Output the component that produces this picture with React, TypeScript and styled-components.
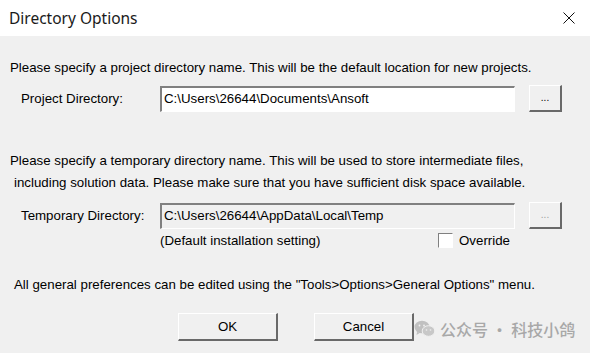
import React from "react";
import styled, { createGlobalStyle, css } from "styled-components";

const Global = createGlobalStyle`
  html, body { margin: 0; padding: 0; background: #f0f0f0; }
  body { width: 590px; height: 353px; overflow: hidden; }
`;

const Dialog = styled.div`
  width: 590px;
  height: 353px;
  display: flex;
  flex-direction: column;
  background: #f0f0f0;
  font-family: "Liberation Sans", Arial, sans-serif;
  font-size: 13.3px;
  color: #000;
`;

const TitleBar = styled.div`
  height: 36px;
  background: #fff;
  display: flex;
  align-items: center;
  justify-content: space-between;
  padding: 0 15px 0 9px;
  flex-shrink: 0;
`;

const Title = styled.div`
  font-family: "Noto Sans", "Open Sans", sans-serif;
  font-size: 15.5px;
  color: #1a1a1a;
  margin-top: -1px;
`;

const Body = styled.div`
  display: flex;
  flex-direction: column;
  padding: 24px 0 0 10px;
`;

const Para = styled.div<{ $indent?: number; $mt?: number }>`
  margin-left: ${(p) => p.$indent ?? 0}px;
  margin-top: ${(p) => p.$mt ?? 0}px;
  line-height: 16px;
  white-space: nowrap;
`;

const FieldRow = styled.div<{ $mt: number }>`
  display: flex;
  align-items: center;
  margin-top: ${(p) => p.$mt}px;
`;

const Label = styled.div`
  width: 150px;
  padding-left: 11px;
  box-sizing: border-box;
`;

const TextField = styled.div<{ $disabled?: boolean }>`
  width: 355px;
  height: 26px;
  box-sizing: border-box;
  border-style: solid;
  border-width: 2px 1px 1px 2px;
  border-color: #808080 #fff #fff #808080;
  background: ${(p) => (p.$disabled ? "#f0f0f0" : "#fff")};
  padding: 3px 2px 0;
  line-height: 16px;
  white-space: nowrap;
  overflow: hidden;
`;

const raised = css`
  box-sizing: border-box;
  background: #f0f0f0;
  border-style: solid;
  border-width: 1px 2px 2px 1px;
  border-color: #fff #696969 #696969 #fff;
  display: flex;
  align-items: center;
  justify-content: center;
  font-family: "Liberation Sans", Arial, sans-serif;
  font-size: 13.3px;
  padding: 0;
`;

const Browse = styled.div<{ $disabled?: boolean }>`
  ${raised};
  width: 33px;
  height: 27px;
  margin-left: 14px;
  color: ${(p) => (p.$disabled ? "#a0a0a0" : "#000")};
  font-size: 10px;
  padding-bottom: 2px;
`;

const SubRow = styled.div`
  display: flex;
  align-items: center;
  margin-top: 2px;
  padding-left: 150px;
  height: 18px;
`;

const Note = styled.div`
  width: 278px;
`;

const Check = styled.div`
  width: 15px;
  height: 15px;
  box-sizing: border-box;
  background: #fff;
  border-style: solid;
  border-width: 1px;
  border-color: #808080 #fff #fff #808080;
  margin-right: 6px;
`;

const Buttons = styled.div`
  display: flex;
  align-items: center;
  margin-top: 20px;
  padding-left: 168px;
  position: relative;
`;

const PushButton = styled.div`
  ${raised};
  width: 100px;
  height: 28px;
  margin-right: 36px;
  padding-bottom: 1px;
`;

const Watermark = styled.div`
  position: absolute;
  left: 404px;
  top: 4px;
  display: flex;
  align-items: center;
  gap: 4px;
  color: #a8a8a8;
  font-family: "Noto Sans CJK SC", sans-serif;
  font-size: 16px;
  font-weight: 500;
  white-space: nowrap;
`;

const CloseIcon = () => (
  <svg width="12" height="12" viewBox="0 0 12 12">
    <path d="M0.5 0.5 L11.5 11.5 M11.5 0.5 L0.5 11.5" stroke="#111" strokeWidth="1" />
  </svg>
);

const WeChat = () => (
  <svg width="22" height="18" viewBox="0 0 22 18">
    <ellipse cx="8" cy="7" rx="7.5" ry="6.3" fill="#c0c0c0" />
    <path d="M3 12 L2.5 15 L6 12.8 Z" fill="#c0c0c0" />
    <ellipse cx="14.5" cy="11" rx="6.3" ry="5.3" fill="#c8c8c8" stroke="#f0f0f0" strokeWidth="1" />
    <circle cx="5.5" cy="5.5" r="0.9" fill="#f0f0f0" />
    <circle cx="10" cy="5.5" r="0.9" fill="#f0f0f0" />
    <circle cx="12.5" cy="10" r="0.8" fill="#f0f0f0" />
    <circle cx="16.5" cy="10" r="0.8" fill="#f0f0f0" />
  </svg>
);

export default function App() {
  return (
    <>
      <Global />
      <Dialog>
        <TitleBar>
          <Title>Directory Options</Title>
          <CloseIcon />
        </TitleBar>
        <Body>
          <Para>
            Please specify a project directory name. This will be the default location for new projects.
          </Para>
          <FieldRow $mt={9}>
            <Label>Project Directory:</Label>
            <TextField>C:\Users\26644\Documents\Ansoft</TextField>
            <Browse>...</Browse>
          </FieldRow>
          <Para $mt={41}>
            Please specify a temporary directory name. This will be used to store intermediate files,
          </Para>
          <Para $indent={4} $mt={6}>
            including solution data. Please make sure that you have sufficient disk space available.
          </Para>
          <FieldRow $mt={11}>
            <Label>Temporary Directory:</Label>
            <TextField $disabled>C:\Users\26644\AppData\Local\Temp</TextField>
            <Browse $disabled>...</Browse>
          </FieldRow>
          <SubRow>
            <Note>(Default installation setting)</Note>
            <Check />
            <span>Override</span>
          </SubRow>
          <Para $indent={4} $mt={28}>
            All general preferences can be edited using the "Tools&gt;Options&gt;General Options" menu.
          </Para>
          <Buttons>
            <PushButton>OK</PushButton>
            <PushButton>Cancel</PushButton>
            <Watermark>
              <WeChat />
              <span>公众号 · 科技小鸽</span>
            </Watermark>
          </Buttons>
        </Body>
      </Dialog>
    </>
  );
}
